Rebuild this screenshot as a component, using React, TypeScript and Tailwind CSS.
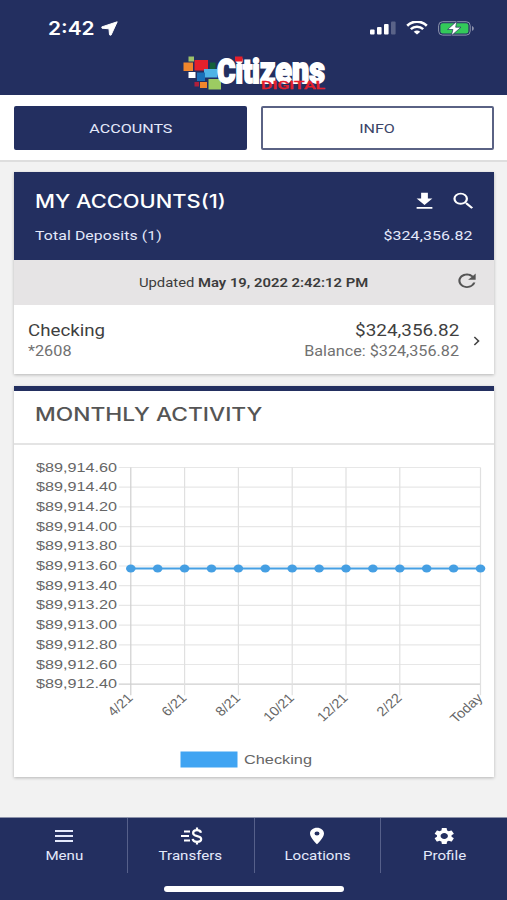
import type { ReactNode } from "react";
import {
  MdChevronRight,
  MdPlace,
  MdRefresh,
  MdSearch,
  MdSettings,
} from "react-icons/md";

const yLabels = [
  "$89,914.60",
  "$89,914.40",
  "$89,914.20",
  "$89,914.00",
  "$89,913.80",
  "$89,913.60",
  "$89,913.40",
  "$89,913.20",
  "$89,913.00",
  "$89,912.80",
  "$89,912.60",
  "$89,912.40",
];

const xLabels = [
  { index: 0, label: "4/21" },
  { index: 2, label: "6/21" },
  { index: 4, label: "8/21" },
  { index: 6, label: "10/21" },
  { index: 8, label: "12/21" },
  { index: 10, label: "2/22" },
  { index: 13, label: "Today" },
];

const LEFT = 116.8;
const RIGHT = 466.5;
const TOP = 22.5;
const ROW = 19.7;
const STEP = (RIGHT - LEFT) / 13;
const BOTTOM = TOP + ROW * 11;
const VALUE_Y = 123.5;

function StatusBar() {
  return (
    <div className="flex h-[56px] items-center justify-between pl-12 pr-[33px]">
      <div className="flex items-center gap-[7px]">
        <span className="w-[46px] whitespace-nowrap font-['Inter'] text-[18.5px] font-semibold leading-none text-white">
          <span className="inline-block origin-left scale-x-[1.13]">2:42</span>
        </span>
        <svg viewBox="0 0 17 15" className="h-[15px] w-[17px]">
          <path d="M16.2.8 10 14.2 8.5 13.8 8 7.8 1 7.2.8 5.9z" fill="#fff" stroke="#fff" strokeWidth="1" strokeLinejoin="round" />
        </svg>
      </div>
      <div className="flex items-center gap-[10px]">
        <svg viewBox="0 0 26 14" className="h-[14px] w-[26px]" fill="#fff">
          <rect x="0" y="8.5" width="4.6" height="5" rx="1" />
          <rect x="7" y="6" width="4.6" height="7.5" rx="1" />
          <rect x="14" y="3" width="4.6" height="10.5" rx="1" />
          <rect x="21" y="0.5" width="4.6" height="13" rx="1" opacity=".25" />
        </svg>
        <svg viewBox="0 0 22 14" className="h-[14px] w-[22px]" fill="none" stroke="#fff">
          <path d="M1.2 4.7a14 14 0 0 1 19.6 0" strokeWidth="2.6" />
          <path d="M4.8 8.2a9 9 0 0 1 12.4 0" strokeWidth="2.5" />
          <path d="M11 13.6 7.7 10.8a5.2 5.2 0 0 1 6.6 0z" fill="#fff" stroke="none" />
        </svg>
        <svg viewBox="0 0 36 15" className="h-[15px] w-[36px]">
          <rect x=".6" y=".7" width="31.6" height="13.4" rx="4" fill="none" stroke="#8e94ae" strokeWidth="1" />
          <rect x="2.4" y="2.2" width="28" height="10.4" rx="2.4" fill="#33c95a" />
          <path d="M34 5v4.8c1.2-.5 1.8-1.3 1.8-2.4S35.2 5.5 34 5z" fill="#8e94ae" />
          <path d="M18.8.2 9.6 8.5h5.300L13.300 14.800l9.700-8.600h-5.300z" fill="#fff" stroke="#232f60" strokeWidth=".7" />
        </svg>
      </div>
    </div>
  );
}

function Logo() {
  return (
    <svg viewBox="0 0 144 36" className="h-9 w-36 overflow-visible" fontFamily="Roboto, sans-serif">
      <rect x="5.5" y="0.5" width="5.5" height="5" fill="#9cc26a" />
      <rect x="0.5" y="6.5" width="9.5" height="8.5" fill="#f0862c" />
      <rect x="11.5" y="4" width="13.5" height="10.5" fill="#e5202c" />
      <rect x="27" y="6.5" width="5.5" height="6.5" fill="#14603a" />
      <rect x="21" y="13" width="13" height="8.5" fill="#4fb4e6" />
      <rect x="5.5" y="16" width="7" height="6" fill="#fff" />
      <rect x="14" y="16.5" width="8" height="8.5" fill="#1a70b8" />
      <rect x="11.5" y="26" width="4.5" height="4.5" fill="#b0203c" />
      <rect x="17" y="26" width="7" height="6" fill="#f0862c" />
      <rect x="25.5" y="23" width="12.5" height="10.5" fill="#9ccb62" />
      <text
        x="34"
        y="26.5"
        fill="#fff"
        stroke="#fff"
        strokeWidth="1.8"
        fontWeight="900"
        textLength="108"
        lengthAdjust="spacingAndGlyphs"
      >
        <tspan fontSize="34">C</tspan>
        <tspan fontSize="33">iti</tspan>
        <tspan fontSize="37">zens</tspan>
      </text>
      <rect x="52" y="0.5" width="7.5" height="5" fill="#e5202c" />
      <text
        x="78"
        y="33"
        fontSize="10.5"
        fontWeight="500"
        fill="#e5202c"
        stroke="#e5202c"
        strokeWidth=".3"
        textLength="64"
        lengthAdjust="spacingAndGlyphs"
      >
        DIGITAL
      </text>
    </svg>
  );
}

function ActivityChart() {
  return (
    <svg
      viewBox="0 0 480 332"
      className="block h-[332px] w-[480px]"
      fontFamily="'Liberation Sans', Arial, sans-serif"
      fontSize="13"
      fill="#666"
    >
      {yLabels.map((label, i) => (
        <g key={label}>
          <line
            x1={LEFT - 12}
            x2={RIGHT}
            y1={TOP + i * ROW}
            y2={TOP + i * ROW}
            stroke={i === 11 ? "#cfcfcf" : "#e7e7e7"}
            strokeWidth="1.2"
          />
          <text x="22" y={TOP + i * ROW + 4} textLength="81" lengthAdjust="spacingAndGlyphs">
            {label}
          </text>
        </g>
      ))}
      {xLabels.map(({ index, label }) => {
        const x = LEFT + index * STEP;
        return (
          <g key={label}>
            <line
              x1={x}
              x2={x}
              y1={TOP}
              y2={BOTTOM + 11}
              stroke={index === 0 ? "#cfcfcf" : "#e0e0e0"}
              strokeWidth="1.2"
            />
            <text
              transform={`translate(${x + 2} ${BOTTOM + 14}) scale(1.1 1) rotate(-45)`}
              textAnchor="end"
              fontSize="13.2"
              y="1"
            >
              {label}
            </text>
          </g>
        );
      })}
      <line x1={LEFT} x2={RIGHT} y1={VALUE_Y} y2={VALUE_Y} stroke="#459fe3" strokeWidth="2.2" />
      {Array.from({ length: 14 }, (_, i) => (
        <ellipse key={i} cx={LEFT + i * STEP} cy={VALUE_Y} rx="4.8" ry="4" fill="#459fe3" />
      ))}
      <rect x="166.5" y="306.5" width="57" height="16" fill="#40a4f2" />
      <text x="230" y="319" textLength="68" lengthAdjust="spacingAndGlyphs">
        Checking
      </text>
    </svg>
  );
}

function NavItem({ icon, label }: { icon: ReactNode; label: string }) {
  return (
    <div className="flex flex-1 flex-col items-center border-r border-[#56608a] pt-[8px] last:border-r-0">
      <div className="flex h-[20px] items-center">{icon}</div>
      <span className="mt-px scale-x-[1.16] text-[13px] leading-[17px] text-[#e4e9fb]">{label}</span>
    </div>
  );
}

export default function App() {
  return (
    <div className="flex h-[900px] w-[507px] flex-col overflow-hidden bg-[#f2f2f2] font-['Roboto',sans-serif]">
      <header className="h-[95px] bg-[#232f60]">
        <StatusBar />
        <div className="flex justify-center pl-[3px]">
          <Logo />
        </div>
      </header>

      <div className="grid h-[67px] grid-cols-2 content-start gap-[14px] border-b-2 border-[#dedede] bg-white pl-[14px] pr-[13px] pt-[11px]">
        <button className="h-[44px] rounded-[2px] bg-[#232f60] text-[13.5px] text-[#e4e9fb]">
          <span className="inline-block scale-x-[1.19]">ACCOUNTS</span>
        </button>
        <button className="h-[44px] rounded-[2px] border-2 border-[#5a6284] bg-white text-[13.5px] text-[#3b4468]">
          <span className="inline-block scale-x-[1.19]">INFO</span>
        </button>
      </div>

      <main className="flex-1 pl-[14px] pr-[13px] pt-[10px]">
        <section className="h-[202px] bg-white shadow-[0_1px_3px_rgba(0,0,0,0.25)]">
          <div className="h-[88px] bg-[#232f60] pl-[21px] pr-[21px] pt-[16px] text-[#e4e9fb]">
            <div className="flex h-[26px] items-center justify-between">
              <h2 className="origin-left scale-x-[1.215] whitespace-nowrap pt-px font-['Inter'] text-[18px] font-medium text-white">
                MY ACCOUNTS(1)
              </h2>
              <div className="-mr-[4px] flex items-center gap-[12px] text-white">
                <svg viewBox="0 0 24 24" preserveAspectRatio="none" className="h-[22.5px] w-[27px]" fill="currentColor">
                  <path d="M19 9h-4V3H9v6H5l7 7 7-7zM5 18v2h14v-2H5z" />
                </svg>
                <MdSearch preserveAspectRatio="none" className="h-[22px] w-[27px]" />
              </div>
            </div>
            <div className="mt-[11px] flex h-[20px] items-center justify-between text-[13.5px] tracking-[0.1px]">
              <span className="origin-left scale-x-[1.17]">Total Deposits (1)</span>
              <span className="origin-right scale-x-[1.18]">$324,356.82</span>
            </div>
          </div>
          <div className="flex h-[45px] items-center bg-[#e6e4e5] pl-[40px] pr-[14px] text-[13px] text-[#3c3c3c]">
            <div className="flex flex-1 justify-center">
              <span className="scale-x-[1.14]">
                Updated <b className="font-semibold">May 19, 2022 2:42:12 PM</b>
              </span>
            </div>
            <MdRefresh preserveAspectRatio="none" className="mb-[3px] h-[21.5px] w-[26px] text-[#555]" />
          </div>
          <div className="flex h-[69px] items-center pl-[14px] pr-[8px] pt-[2px]">
            <div className="flex-1">
              <div className="w-fit origin-left scale-x-[1.17] text-[16px] leading-[21px] text-[#3f3f3f]">Checking</div>
              <div className="w-fit origin-left scale-x-[1.16] text-[14px] leading-[21px] text-[#717171]">*2608</div>
            </div>
            <div className="flex flex-col items-end">
              <div className="w-fit origin-right scale-x-[1.18] text-[16px] leading-[21px] text-[#3f3f3f]">$324,356.82</div>
              <div className="w-fit origin-right scale-x-[1.155] text-[14px] leading-[21px] text-[#717171]">
                Balance: $324,356.82
              </div>
            </div>
            <MdChevronRight preserveAspectRatio="none" className="ml-[8px] h-[18px] w-[19px] text-[#444]" />
          </div>
        </section>

        <section className="mt-[12px] h-[391px] border-t-[5px] border-[#232f60] bg-white shadow-[0_1px_3px_rgba(0,0,0,0.25)]">
          <div className="flex h-[54px] items-center border-b-2 border-[#e4e4e4] pb-[5px] pl-[21px]">
            <h2 className="origin-left scale-x-[1.265] whitespace-nowrap font-['Inter'] text-[18px] font-medium text-[#555]">
              MONTHLY ACTIVITY
            </h2>
          </div>
          <ActivityChart />
        </section>
      </main>

      <nav className="flex h-[83px] flex-col items-center border-t border-[#8d93ab] bg-[#232f60]">
        <div className="flex h-[55px] w-full pl-px">
          <NavItem
            label="Menu"
            icon={
              <svg viewBox="0 0 18 12" className="h-3 w-[18px]" stroke="#e4e9fb" strokeWidth="2">
                <path d="M0 1h18M0 6h18M0 11h18" />
              </svg>
            }
          />
          <NavItem
            label="Transfers"
            icon={
              <svg viewBox="0 0 24 20" className="h-[20px] w-[24px]" fill="none" stroke="#fff">
                <path d="M5 5.5h6M2 10h8M5 14.5h6" strokeWidth="1.8" />
                <path
                  d="M22 6.7c-.5-1.7-2-2.5-4-2.5-2.3 0-3.9 1.1-3.9 2.8 0 4.2 8.1 2 8.1 6.1 0 1.8-1.8 2.8-4.2 2.8-2.4 0-4-1-4.4-3M18 1.5v2.7M18 15.9v2.6"
                  strokeWidth="2.2"
                />
              </svg>
            }
          />
          <NavItem label="Locations" icon={<MdPlace preserveAspectRatio="none" className="h-[20px] w-[24px] text-white" />} />
          <NavItem label="Profile" icon={<MdSettings preserveAspectRatio="none" className="h-[20px] w-[24.5px] text-white" />} />
        </div>
        <div className="mt-[13px] h-[6px] w-[180px] rounded-full bg-white" />
      </nav>
    </div>
  );
}
